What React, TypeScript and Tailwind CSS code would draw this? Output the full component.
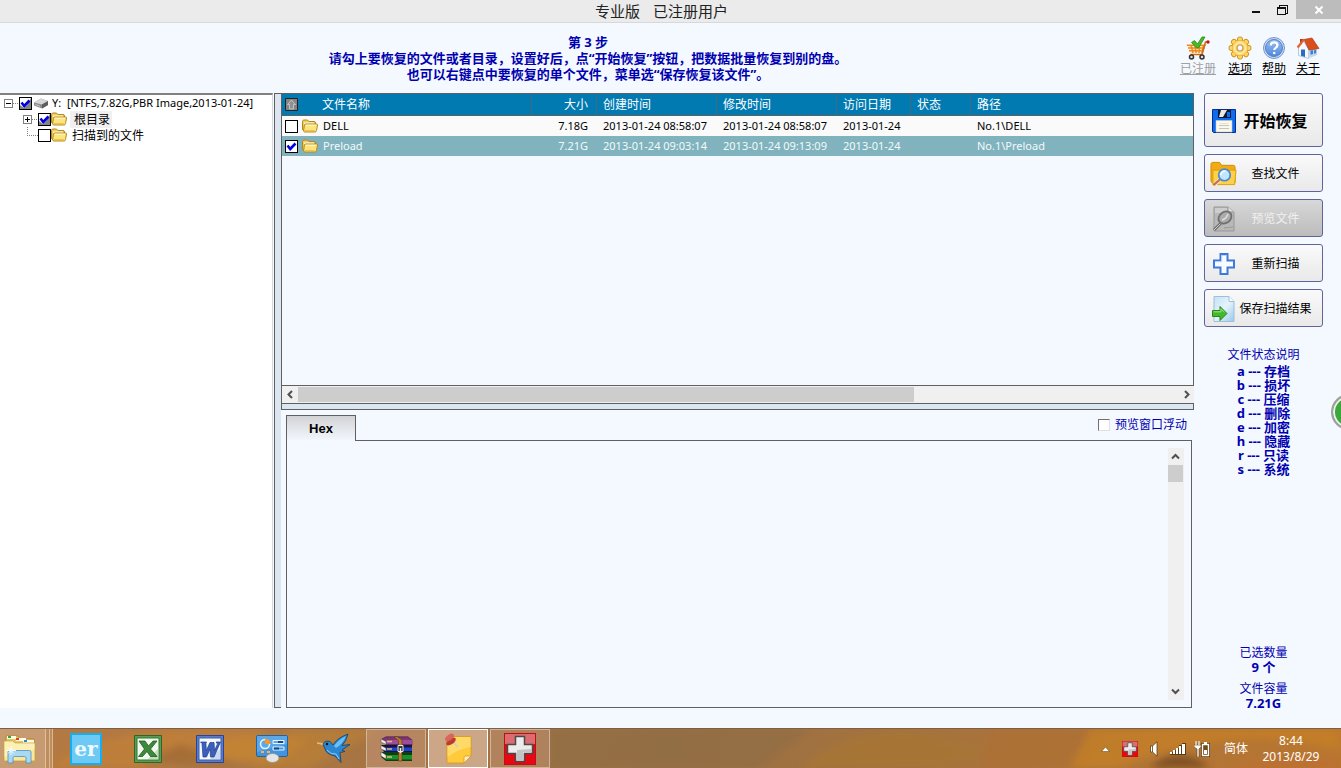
import { useState } from 'react';
import type { ReactNode } from 'react';

type FileRow = {
  name: string;
  size: string;
  created: string;
  modified: string;
  accessed: string;
  status: string;
  path: string;
};

const files: FileRow[] = [
  { name: 'DELL', size: '7.18G', created: '2013-01-24 08:58:07', modified: '2013-01-24 08:58:07', accessed: '2013-01-24', status: '', path: 'No.1\\DELL' },
  { name: 'Preload', size: '7.21G', created: '2013-01-24 09:03:14', modified: '2013-01-24 09:13:09', accessed: '2013-01-24', status: '', path: 'No.1\\Preload' },
];

const columns = ['创建时间', '修改时间', '访问日期', '状态'];

const legend = [
  ['a', '存档'],
  ['b', '损坏'],
  ['c', '压缩'],
  ['d', '删除'],
  ['e', '加密'],
  ['h', '隐藏'],
  ['r', '只读'],
  ['s', '系统'],
];

const FolderIcon = () => (
  <svg width="16" height="14" viewBox="0 0 16 14" className="shrink-0">
    <path d="M.5 10V2.500Q.5 1 2 1h3.500L7 2.500h5q1.500 0 1.500 1.500v7H2Q.5 11.500.5 10Z" fill="#f0cc58" stroke="#b08a20" />
    <path d="M2 3.500h10v3H2z" fill="#fffbe4" />
    <path d="M3.500 5h11q1.200 0 1 1l-1 5.500q-.2 1.500-1.500 1.500H3q-1.200 0-1.400-1L2.400 6q.1-1 1.100-1Z" fill="#ffe47c" stroke="#b08a20" />
    <path d="M4 6.200h10" stroke="#fffad8" />
    <path d="M3 11.800h9.500" stroke="#e4b43c" />
  </svg>
);

const DriveIcon = () => (
  <svg width="16" height="12" viewBox="0 0 16 12" className="shrink-0">
    <path d="M1 5.500 8 1.500l7 2.500v4L9 11.500 1 8.500Z" fill="#8b8b8b" />
    <path d="M1 5.500 8 1.500l7 2.500-6 3.500Z" fill="#d6d6d6" />
    <path d="M9 7.500 15 4v4l-6 3.500Z" fill="#5d5d5d" />
    <path d="M2.500 7.500 7 9.200" stroke="#c9c9c9" />
  </svg>
);

const CheckBox = ({ label, initial = false, partial = false }: { label: string; initial?: boolean; partial?: boolean }) => (
  <span className="relative inline-flex shrink-0">
    <input
      type="checkbox"
      aria-label={label}
      defaultChecked={initial}
      className={`peer size-[13px] appearance-none border border-black bg-white ${partial ? 'checked:bg-[#848484]' : ''}`}
    />
    <svg width="13" height="13" viewBox="0 0 13 13" className="pointer-events-none absolute inset-0 hidden peer-checked:block">
      {partial && <path d="M1 1h11L8 8 5 11 1 8Z" fill="#fff" />}
      <path d="M2.500 5.500 5.200 9 10.500 3.500" fill="none" stroke="#0000e0" strokeWidth="2.600" />
    </svg>
  </span>
);

const Expander = ({ open }: { open: boolean }) => (
  <svg width="9" height="9" viewBox="0 0 9 9" className="shrink-0" shapeRendering="crispEdges">
    <path d="M.5.5h8v8h-8z" fill="#fff" stroke="#808080" />
    <path d={open ? 'M2 4.500h5' : 'M2 4.500h5M4.500 2v5'} stroke="#000" />
  </svg>
);

const Dots = ({ w }: { w: number }) => (
  <svg width={w} height="1" className="shrink-0" shapeRendering="crispEdges">
    <path d={`M0 .5H${w}`} stroke="#808080" strokeDasharray="1 1" />
  </svg>
);

const Chevron = ({ d }: { d: string }) => (
  <svg width="9" height="9" viewBox="0 0 9 9">
    <path d={d} fill="none" stroke="#505050" strokeWidth="2" />
  </svg>
);

/* toolbar drawings */

const CartIcon = () => (
  <svg width="24" height="24" viewBox="0 0 24 24">
    <path d="M1 9h19l-3 8H4Z" fill="#ffe8c8" />
    <path d="M.8 9.200h19M2 12h17M3 14.800h15M5 9l2 8M9 9l1 8M13.500 9l-.5 8M17.500 9 16 17" stroke="#f08a1c" strokeWidth="1.500" fill="none" />
    <path d="M22 6h-2.500L16 18.500H4.500" stroke="#d06a10" strokeWidth="1.500" fill="none" />
    <circle cx="22" cy="6" r="1.700" fill="#c01818" />
    <circle cx="5.500" cy="21" r="2" fill="#ddd" stroke="#333" strokeWidth="1.500" />
    <circle cx="16" cy="21" r="2" fill="#ddd" stroke="#333" strokeWidth="1.500" />
    <path d="m5.500 6.500 3-2 3 3.500L16 1h3l-6.500 11h-2Z" fill="#4cb82c" stroke="#2a8a14" strokeWidth=".8" />
  </svg>
);

const GearIcon = () => (
  <svg width="24" height="24" viewBox="0 0 24 24">
    {[0, 45, 90, 135, 180, 225, 270, 315].map((a) => (
      <rect key={a} x="9.500" y="1" width="5" height="7" rx="2" fill="#ffd668" stroke="#cf9414" transform={`rotate(${a} 12 12)`} />
    ))}
    <circle cx="12" cy="12" r="7.800" fill="#ffdc72" stroke="#dda52c" strokeWidth=".6" />
    <circle cx="12" cy="12" r="5.500" fill="none" stroke="#fff0b4" />
    <circle cx="12" cy="12" r="3" fill="#f4f8ff" stroke="#c99a60" strokeWidth="1.200" />
  </svg>
);

const HelpIcon = () => (
  <svg width="24" height="24" viewBox="0 0 24 24">
    <defs>
      <linearGradient id="help" x2="0" y2="1">
        <stop stopColor="#9ebff0" />
        <stop offset="1" stopColor="#4d88dc" />
      </linearGradient>
    </defs>
    <circle cx="12" cy="12" r="10.500" fill="#c8dcf8" stroke="#7698cc" />
    <circle cx="12" cy="12" r="8.500" fill="url(#help)" stroke="#5580c4" />
    <path d="M8.800 9.500q0-3.200 3.300-3.200t3.300 2.900q0 1.500-1.700 2.600-1.400.9-1.400 2.200" fill="none" stroke="#fff" strokeWidth="2.200" />
    <circle cx="12.200" cy="17" r="1.300" fill="#fff" />
  </svg>
);

const HouseIcon = () => (
  <svg width="24" height="24" viewBox="0 0 24 24">
    <path d="M4 3h3.500v6H4z" fill="#a83c1c" />
    <path d="M2.500 12 7.500 5 12.500 13v9.500l-10-3Z" fill="#f5f8fc" stroke="#8ea8c4" strokeWidth=".6" />
    <path d="M12.500 13H21v6l-8.500 3.500Z" fill="#c3d8ee" />
    <path d="M5 13.500h4v7.500l-4-1.200z" fill="#2b6cc0" />
    <path d="m14.500 14.500 2.500-.3v3.800l-2.500.8Zm3.600-.4 2-.3v3.400l-2 .6Z" fill="#3b80d0" />
    <path d="M8 3.500 16 2l7 10.500-10 1.500Z" fill="#d9501c" stroke="#b03a10" strokeWidth=".7" />
    <path d="M8 3.500 1.500 11.500" stroke="#e8602c" strokeWidth="2" />
  </svg>
);

/* action button drawings */

const FloppyIcon = () => (
  <svg width="24" height="24" viewBox="0 0 24 24">
    <path d="M.5.5h23v23h-22l-1-1Z" fill="#0a6cf0" stroke="#0a2a90" />
    <path d="M6 1h13v8H6z" fill="#111827" />
    <path d="M9 1h6l-4 7H7Z" fill="#e8e8e8" />
    <path d="M15 3h3v5h-3z" fill="#0a6cf0" />
    <path d="M4 11.500h16V23H4z" fill="#faf8ec" stroke="#cfcbb0" strokeWidth=".6" />
    <path d="M7 16.500h10M7 19.500h10" stroke="#c4c4bc" />
    <path d="M8 14.500h8" stroke="#e5e2d0" />
  </svg>
);

const SearchFolderIcon = () => (
  <svg width="28" height="26" viewBox="0 0 28 26">
    <path d="M1 3q0-2 2-2h7l2 3h12q2 0 2 2v16H3q-2 0-2-2Z" fill="#f0ac10" stroke="#d08c08" />
    <path d="M3 9h24l-1.500 15H3Z" fill="#ffd148" stroke="#e09c10" />
    <path d="m10.500 18.500-5.500 5" stroke="#f4f4f4" strokeWidth="4" />
    <path d="m10.500 18.500-7 6" stroke="#c87444" strokeWidth="2.500" />
    <circle cx="15" cy="14" r="6" fill="#bfe6fc" stroke="#4c8ad0" strokeWidth="1.800" />
    <path d="M11 14q1-4 5-4" stroke="#fff" strokeWidth="1.500" fill="none" />
  </svg>
);

const PreviewIcon = () => (
  <svg width="26" height="28" viewBox="0 0 26 28">
    <path d="M3 2h14l6 5v19H3Z" fill="#b8b8b8" stroke="#989898" />
    <path d="M4 3h12v5H4z" fill="#cdcdcd" />
    <path d="M17 2v5h6" fill="#ddd" stroke="#999" />
    <path d="m11 17-8 8" stroke="#707070" strokeWidth="3" />
    <path d="m11 17-8 8" stroke="#ccc" strokeWidth="1" />
    <ellipse cx="14" cy="12.500" rx="7" ry="5.500" fill="#ababab" stroke="#707070" strokeWidth="1.800" transform="rotate(-35 14 12.500)" />
    <path d="M11 15q4-1 6-6" stroke="#e0e0e0" strokeWidth="1.500" fill="none" />
    <path d="m13 23 9-1" stroke="#999" />
  </svg>
);

const PlusIcon = () => (
  <svg width="24" height="24" viewBox="0 0 24 24">
    <path d="M8.500 2h7v6.500H22v7h-6.500V22h-7v-6.500H2v-7h6.500Z" fill="#f8fcff" stroke="#3e78dc" strokeWidth="2" />
    <path d="M3.500 9.700h6.200V3.500h4.600" stroke="#b9d8f8" fill="none" />
  </svg>
);

const ExportIcon = () => (
  <svg width="24" height="28" viewBox="0 0 24 28">
    <defs>
      <linearGradient id="sheet" x2="1" y2="1">
        <stop stopColor="#c5e2f6" />
        <stop offset=".5" stopColor="#e4f3fc" />
        <stop offset="1" stopColor="#9cc8ea" />
      </linearGradient>
    </defs>
    <path d="M2 1.500h15l5 5v20H2Z" fill="url(#sheet)" stroke="#9cbfdc" />
    <path d="M17 1.500v5h5" fill="#fff" stroke="#9cbfdc" />
    <path d="M.5 15.500H8v-4l7 7-7 7v-4H.5Z" fill="#46b82c" stroke="#23881a" />
    <path d="M1.500 16.800H9v-3l3.500 3.500" stroke="#9ce484" fill="none" />
  </svg>
);

const RedCross = ({ size }: { size: number }) => (
  <svg width={size} height={size} viewBox="0 0 32 32">
    <path d="M0 0h32v32H0z" fill="#c40c14" />
    <path d="M1 1h30v10Q16 15 1 11Z" fill="#dc6c70" />
    <path d="M1 12q15 4 30 0v19H1z" fill="#e60812" />
    <path d="M11.500 3.500h9v8h8v9h-8v8h-9v-8h-8v-9h8Z" fill="#ececec" stroke="#4a4a4a" strokeWidth="1.500" />
    <path d="M13 17v10h6v-8h8v-3Z" fill="#c4c4c4" />
  </svg>
);

/* task bar drawings */

const ExplorerIcon = () => (
  <svg width="34" height="32" viewBox="0 0 34 32">
    <path d="M3 3h12l2 3h14v20H3Z" fill="#e8c860" stroke="#a8842c" strokeWidth=".8" />
    <path d="M4 3h9v3H4zM13 5h10v3H13zM20 7h11v3H20z" fill="#fffbe8" />
    <path d="M5 3h3v2H5z" fill="#2ca844" />
    <path d="M13 5h3v2h-3z" fill="#d84028" />
    <path d="M21 7h3v2h-3z" fill="#2c88d8" />
    <path d="M1 8h9l2 2h20v18H1Z" fill="#f9e79a" stroke="#c5a040" strokeWidth=".8" />
    <path d="M1.500 8.500H10l2 2h19.500v6L1.500 24Z" fill="#fdf3c0" opacity=".7" />
    <path d="M5 30V19q0-1.500 1.500-1.500h20Q28 17.500 28 19v11h-5v-5q0-1.500-1.500-1.500h-10Q10 23.500 10 25v5Z" fill="#a9d9f2" stroke="#4a90c0" strokeWidth=".8" />
    <path d="M8 13v9M3 17.500h10M5 14.500l6 6M11 14.500l-6 6" stroke="#fff" opacity=".9" />
  </svg>
);

const ErIcon = () => (
  <span className="flex size-8 items-center justify-center border-2 border-[#16aeee] bg-[#6ccaf4] font-['DejaVu_Serif','Noto_Serif',serif] text-xl leading-5 font-bold text-[#f0faff]">er</span>
);

const ExcelIcon = () => (
  <svg width="28" height="28" viewBox="0 0 28 28">
    <path d="M.5.5h27v27H.5z" fill="#5d9a54" stroke="#2a6a28" />
    <path d="M3 3h22v22H3z" fill="#f3f8f1" stroke="#2f7a2c" />
    <path d="M14 24h10V14Z" fill="#c4dcc0" />
    <path d="M5 6h6l3.500 5L19 6h4l-6.500 8 6.500 7.500h-6.500L13 16.500 8.500 21.500h-4l6-7.500Z" fill="#3f8a3a" stroke="#1e5a1c" strokeWidth=".8" />
  </svg>
);

const WordIcon = () => (
  <svg width="28" height="28" viewBox="0 0 28 28">
    <path d="M.5.5h27v27H.5z" fill="#587cc4" stroke="#2444a0" />
    <path d="M3 3h22v22H3z" fill="#f5f8fd" stroke="#3c5cb0" />
    <path d="M14 24h10V14Z" fill="#ccd8f0" />
    <path d="M4.500 7h6l-.6 1.500.4 7L14 7.500h4l.5 8L21.500 9 20 7h4.500l-6.500 15h-3.500L14 14l-3.500 8H7L6 8.500Z" fill="#3c60bc" stroke="#203c8c" strokeWidth=".7" />
  </svg>
);

const PanelIcon = () => (
  <svg width="32" height="28" viewBox="0 0 32 28">
    <rect x=".5" y=".5" width="31" height="21" rx="1.500" fill="#4294dc" stroke="#1e64a8" />
    <path d="M1 1h30v8Q16 13 1 17Z" fill="#6db4ee" opacity=".6" />
    <circle cx="9" cy="9" r="4.500" fill="none" stroke="#e8f4ff" strokeWidth="1.500" />
    <path d="M9 9V3.500A5.500 5.500 0 0 1 14.500 9Z" fill="#f89820" />
    <path d="M17 5.500h11v3H17zM17 12h11v3H17z" fill="none" stroke="#e8f4ff" />
    <path d="M22 6h5v2h-5zM18 12.500h5v2h-5z" fill="#134a88" />
    <path d="M5 17h3M11 17h3" stroke="#ffb050" strokeWidth="2" />
    <ellipse cx="16.500" cy="23" rx="6.500" ry="4.500" fill="#e4e4e4" stroke="#8c8c8c" strokeWidth=".7" />
  </svg>
);

const BirdIcon = () => (
  <svg width="34" height="32" viewBox="0 0 34 32">
    <path d="m0 10 7 .5v1.500Z" fill="#f0c060" stroke="#e8c070" />
    <path d="M6 11q2-4 7-2.500l3 3.500Q20 5 31 1q-2 8-6 11.500l8-1-8 5.500 3 1.500-5 1 1 10-6-6.500Q9 21 8 16Z" fill="#2c86d0" stroke="#12406c" strokeWidth=".8" />
    <path d="M17 13q5-7 12-10-3 8-10 12Z" fill="#6cc0f4" />
    <path d="M10 17q4 5 9 4l3 5" fill="none" stroke="#8cd0f8" />
    <circle cx="10" cy="11" r="1.200" fill="#111" />
  </svg>
);

const RarIcon = () => (
  <svg width="33" height="26" viewBox="0 0 33 26">
    <path d="M2 3 6 .8h22L32 4v5H6Z" fill="#7c3474" stroke="#401840" strokeWidth=".6" />
    <path d="M6 4h26v4H6z" fill="#a04c98" />
    <path d="M1 9h31v7H4Z" fill="#14143c" />
    <path d="M6 11.500h26V15H6z" fill="#1c44c8" />
    <path d="M1 16h31v9H6l-5-4Z" fill="#123c14" />
    <path d="M6 19h26v4.500H6z" fill="#1a9028" />
    <path d="M7 5.500h5M7 13h5M7 21h5" stroke="#d8c078" strokeWidth="1.500" />
    <path d="m1 3 5 2.500v3L1 6Zm0 6.500 5 2.500v3L1 13Zm0 6.500 5 3v4l-5-3Z" fill="#f2f2f2" stroke="#444" strokeWidth=".5" />
    <path d="m17 .5 5 3.500v21h-3.500V4.500L14 1Z" fill="#b47c34" stroke="#5c3810" strokeWidth=".6" />
    <path d="M18 9.500h5v6h-5z" fill="#333" stroke="#e8e8e8" />
    <path d="M20.500 12v5" stroke="#eee" strokeWidth="1.500" />
  </svg>
);

const NoteIcon = () => (
  <svg width="28" height="32" viewBox="0 0 28 32">
    <path d="M3 5q0-1.500 1.500-1.500h21Q27 3.500 27 5v18l-7 7H4.500Q3 30 3 28.500Z" fill="#ffcb3c" stroke="#d89818" strokeWidth=".8" />
    <path d="M3.500 4h23v10q-12 2-23 10Z" fill="#ffe07c" opacity=".7" />
    <path d="M20 30v-5.500q0-1.500 1.500-1.500H27Z" fill="#fff0b8" stroke="#d89818" strokeWidth=".8" />
    <path d="m8 8 6 6" stroke="#ccc" strokeWidth="1.500" />
    <ellipse cx="7" cy="8.500" rx="5.500" ry="2.800" fill="#b83c34" transform="rotate(-35 7 8.500)" />
    <ellipse cx="5.500" cy="4.500" rx="5" ry="2.800" fill="#dc6458" transform="rotate(-35 5.500 4.500)" />
  </svg>
);

const SpeakerIcon = () => (
  <svg width="8" height="16" viewBox="0 0 8 16">
    <path d="M.5 5h2L7 .8v14.400L2.500 11h-2Z" fill="#fff" stroke="#5a3c14" strokeWidth=".8" />
    <path d="M2.500 5v6" stroke="#5a3c14" strokeWidth=".8" />
  </svg>
);

const SignalIcon = () => (
  <svg width="16" height="12" viewBox="0 0 16 12" shapeRendering="crispEdges">
    <path d="M0 9h3v3H0zM3 7h3v5H3zM6 5h3v7H6zM9 2h3v10H9zM12 0h4v12h-4z" fill="#5a3c14" />
    <path d="M0 9h2v2H0zM3 7h2v4H3zM6 5h2v6H6zM9 3h2v8H9zM12 1h3v10h-3z" fill="#fff" />
  </svg>
);

const PowerIcon = () => (
  <svg width="16" height="16" viewBox="0 0 16 16">
    <path d="M2 0v4M5 0v4M0 4h7v2L5 8v8H3V8L0 6Z" fill="#fff" stroke="#5a3c14" strokeWidth=".6" />
    <path d="M2 0v4M5 0v4" stroke="#fff" strokeWidth="1.200" />
    <path d="M8.500 3.500h6v11h-6z" fill="none" stroke="#5a3c14" strokeWidth="3" />
    <path d="M10 1h3v2h-3z" fill="#fff" />
    <path d="M8.500 3.500h6v11h-6z" fill="#74491a" stroke="#fff" strokeWidth="1.400" />
    <path d="M10 9h3v4h-3z" fill="#fff" />
  </svg>
);

const actions: { label: string; icon: ReactNode; big?: boolean; disabled?: boolean }[] = [
  { label: '开始恢复', icon: <FloppyIcon />, big: true },
  { label: '查找文件', icon: <SearchFolderIcon /> },
  { label: '预览文件', icon: <PreviewIcon />, disabled: true },
  { label: '重新扫描', icon: <PlusIcon /> },
  { label: '保存扫描结果', icon: <ExportIcon /> },
];

const TitleBar = () => (
  <header className="flex h-[23px] items-start border-b border-[#d8d8d8] bg-[#ebebeb]">
    <h1 className="flex-1 pl-20 text-center text-[15px] leading-[22px] text-[#222]">
      专业版<span className="ml-[13px]">已注册用户</span>
    </h1>
    <button aria-label="最小化" className="flex h-[19px] w-[26px] items-center justify-center">
      <svg width="8" height="8"><path d="M0 5h8v2H0z" fill="#111" /></svg>
    </button>
    <button aria-label="还原" className="flex h-[19px] w-[27px] items-center justify-center pr-px">
      <svg width="11" height="10" viewBox="0 0 11 10" shapeRendering="crispEdges">
        <path d="M2.500 2V.5h8V8H9" fill="none" stroke="#111" />
        <path d="M0 2h9v8H0Z" fill="#111" />
        <path d="M1 4h7v5H1Z" fill="#ebebeb" />
      </svg>
    </button>
    <button aria-label="关闭" className="flex h-[19px] w-[45px] items-center justify-center bg-[#bcbcbc]">
      <svg width="8" height="8"><path d="m.5.5 7 7m0-7-7 7" stroke="#fff" strokeWidth="2" /></svg>
    </button>
  </header>
);

const ToolLink = ({ label, icon, muted }: { label: string; icon: ReactNode; muted?: boolean }) => (
  <a href="#" className={`flex flex-col items-center gap-px text-xs leading-4 underline ${muted ? 'mr-0.5 text-[#a0a0a0]' : 'text-black'}`}>
    {icon}
    {label}
  </a>
);

const TopPanel = () => (
  <div className="flex h-[70px] items-start">
    <p className="flex-1 pt-[11px] text-center text-[13px] leading-4 font-bold text-[#0000b0]">
      第 3 步<br />
      请勾上要恢复的文件或者目录，设置好后，点“开始恢复”按钮，把数据批量恢复到别的盘。<br />
      也可以右键点中要恢复的单个文件，菜单选“保存恢复该文件”。
    </p>
    <nav className="flex w-[165px] justify-end gap-2.5 pt-[13px] pr-[21px]">
      <ToolLink label="已注册" icon={<CartIcon />} muted />
      <ToolLink label="选项" icon={<GearIcon />} />
      <ToolLink label="帮助" icon={<HelpIcon />} />
      <ToolLink label="关于" icon={<HouseIcon />} />
    </nav>
  </div>
);

const TreePanel = () => (
  <aside className="w-[273px] shrink-0 border-t-2 border-r border-t-[#808080] border-r-[#d8d8d8] bg-white text-black">
    <ul>
      <li>
        <div className="flex h-4 items-center pl-1">
          <Expander open />
          <Dots w={6} />
          <CheckBox label="Y:" initial partial />
          <span className="ml-px flex"><DriveIcon /></span>
          <span className="ml-[3px] text-[11px] whitespace-pre">Y:  [NTFS,7.82G,PBR Image,2013-01-24]</span>
        </div>
        <ul className="pl-[23px]">
          <li className="flex h-4 items-center">
            <Expander open={false} />
            <Dots w={6} />
            <CheckBox label="根目录" initial partial />
            <FolderIcon />
            <span className="ml-[3px] bg-[#f0f0f0] pt-px pr-0.5 pl-1 text-xs leading-4">根目录</span>
          </li>
          <li className="flex h-4 items-center">
            <svg width="15" height="16" className="shrink-0" shapeRendering="crispEdges">
              <path d="M4.500 0v8.500H15" fill="none" stroke="#808080" strokeDasharray="1 1" />
            </svg>
            <CheckBox label="扫描到的文件" />
            <FolderIcon />
            <span className="ml-[5px] pt-px text-xs leading-4">扫描到的文件</span>
          </li>
        </ul>
      </li>
    </ul>
  </aside>
);

const FileTable = () => {
  const [selected, setSelected] = useState('Preload');

  return (
    <div className="h-[293px] overflow-hidden border border-[#606060]">
      <table className="w-full table-fixed border-separate border-spacing-0 text-left">
        <colgroup>
          <col className="w-[250px]" />
          <col className="w-[65px]" />
          <col className="w-[120px]" />
          <col className="w-[120px]" />
          <col className="w-[74px]" />
          <col className="w-[60px]" />
          <col />
        </colgroup>
        <thead>
          <tr className="h-[22px] bg-[#007ab1] text-xs leading-4 text-white">
            <th className="border-r border-b border-r-[#3f6a82] border-b-[#606060] pl-[3px] font-normal">
              <div className="flex items-center">
                <svg width="13" height="13" viewBox="0 0 13 13">
                  <path d="M.5.5h12v12H.5z" fill="#848484" stroke="#222" />
                  <path d="m6.500 2 4 4.500h-2V11h-4V6.500h-2Z" fill="#909090" stroke="#d0d0d0" strokeWidth=".8" />
                </svg>
                <span className="ml-6">文件名称</span>
              </div>
            </th>
            <th className="border-r border-b border-r-[#3f6a82] border-b-[#606060] pr-2 text-right font-normal">大小</th>
            {columns.map((c) => (
              <th key={c} className="border-r border-b border-r-[#3f6a82] border-b-[#606060] pl-1.5 font-normal">{c}</th>
            ))}
            <th className="border-b border-[#606060] pl-1.5 font-normal">路径</th>
          </tr>
        </thead>
        <tbody>
          {files.map((f) => (
            <tr
              key={f.name}
              onClick={() => setSelected(f.name)}
              className={`h-5 text-[11px] leading-4 whitespace-nowrap ${f.name === selected ? 'bg-[#80b3be] text-[#f2fafa]' : 'bg-[#fafafa] text-black'}`}
            >
              <td className="pl-[3px]">
                <div className="flex items-center">
                  <CheckBox label={f.name} initial={f.name === 'Preload'} />
                  <span className="mr-[5px] ml-1 flex"><FolderIcon /></span>
                  {f.name}
                </div>
              </td>
              <td className="pr-[9px] text-right">{f.size}</td>
              <td className="pl-1.5">{f.created}</td>
              <td className="pl-1.5">{f.modified}</td>
              <td className="pl-1.5">{f.accessed}</td>
              <td className="pl-1.5">{f.status}</td>
              <td className="pl-1.5">{f.path}</td>
            </tr>
          ))}
        </tbody>
      </table>
    </div>
  );
};

const HexPanel = () => (
  <section className="mt-[5px] mr-0.5 ml-[5px] flex flex-1 flex-col">
    <div className="relative z-10 -mb-px flex h-[26px] justify-between">
      <button className="w-[70px] border-x border-t border-[#606060] bg-linear-to-b from-[#d2d3d5] to-[#f4f8ff] font-['Liberation_Sans',Arial,sans-serif] text-[13px] font-bold text-black">
        Hex
      </button>
      <label className="flex h-5 items-center gap-[5px] pr-[5px] text-xs text-[#0000b0]">
        <input type="checkbox" className="size-3 appearance-none border border-t-[#707070] border-r-[#e0e0e0] border-b-[#e0e0e0] border-l-[#707070] bg-white checked:bg-[#0000b0]" />
        预览窗口浮动
      </label>
    </div>
    <div className="flex flex-1 justify-end border border-[#606060] py-[7px] pr-[7px]">
      <div className="flex w-4 flex-col bg-[#f0f0f0]">
        <button aria-label="向上滚动" className="flex h-[17px] items-center justify-center pr-px"><Chevron d="M1 6.500 4.500 3 8 6.500" /></button>
        <div className="mr-px h-[17px] bg-[#cdcdcd]" />
        <button aria-label="向下滚动" className="mt-auto flex h-[17px] items-center justify-center pr-px"><Chevron d="M1 2.500 4.500 6 8 2.500" /></button>
      </div>
    </div>
  </section>
);

const SidePanel = () => (
  <aside className="ml-2.5 mr-[18px] flex w-[119px] shrink-0 flex-col gap-[7px]">
    {actions.map((a) => (
      <button
        key={a.label}
        disabled={a.disabled}
        className={`flex items-center rounded-[3px] border border-[#62629c] pl-[5px] ${a.big ? 'h-[54px] text-base font-bold' : 'h-[38px] text-xs'} ${
          a.disabled ? 'bg-linear-to-b from-[#d8d8d8] to-[#bcbcbc] text-[#f0f0f0]' : 'bg-linear-to-b from-[#fafafa] to-[#e9e9e9] text-black'
        }`}
      >
        <span className="flex w-[27px] shrink-0 justify-center pt-0.5">{a.icon}</span>
        <span className="flex-1 pt-0.5 pr-2 text-center">{a.label}</span>
      </button>
    ))}
    <div className="mt-[13px] text-center text-[#0000b0]">
      <h2 className="mb-px text-xs leading-4">文件状态说明</h2>
      <ul className="text-[13px] leading-[14px] font-bold">
        {legend.map(([key, text]) => (
          <li key={key}>{key} --- {text}</li>
        ))}
      </ul>
    </div>
    <dl className="mt-auto mb-[-2px] text-center text-[#0000b0]">
      <dt className="text-xs leading-[14px]">已选数量</dt>
      <dd className="mb-2 text-[13px] leading-[14px] font-bold">9 个</dd>
      <dt className="text-xs leading-[14px]">文件容量</dt>
      <dd className="text-[13px] leading-[14px] font-bold">7.21G</dd>
    </dl>
  </aside>
);

const launchers = [
  { label: '浏览器', icon: <ErIcon /> },
  { label: 'Excel', icon: <ExcelIcon /> },
  { label: 'Word', icon: <WordIcon /> },
  { label: '控制面板', icon: <PanelIcon /> },
  { label: '飞鸟', icon: <BirdIcon /> },
];

const TaskBar = () => (
  <footer className="relative mt-5 flex h-10 items-center overflow-hidden border-t border-[#7a6048] bg-linear-to-r from-[#b67a42] via-[#9a7044] to-[#b97630]">
    {/* flower wallpaper showing through the glass */}
    <svg className="absolute inset-0 h-full w-full" viewBox="0 0 1341 40" preserveAspectRatio="none">
      <defs>
        <filter id="soft"><feGaussianBlur stdDeviation="4" /></filter>
      </defs>
      <g filter="url(#soft)">
        <path d="M50 40Q90 5 180 0h90q-40 25-130 40Z" fill="#c48036" opacity=".7" />
        <path d="M180 32q60-34 130-22l-30 24Z" fill="#ca882e" opacity=".7" />
        <path d="M290 0h90l-70 40h-60Z" fill="#be8232" opacity=".6" />
        <path d="M140 34l40-18 60 20Z" fill="#7c5434" opacity=".4" />
        <path d="M550 0h260l-50 40H550Z" fill="#8e6c44" opacity=".6" />
        <path d="M800 40q50-40 110-38l80 20-50 18Z" fill="#a67636" opacity=".8" />
        <path d="M990 0h110l-30 40h-90Z" fill="#ad7034" opacity=".8" />
        <path d="M1090 0h250v22q-60-16-110-10-60 5-110 28h-50Z" fill="#c88024" opacity=".7" />
        <path d="M1150 40q20-22 50-8l10 8Z" fill="#6c4220" opacity=".7" />
        <path d="M1230 40q40-16 111-8v8Z" fill="#bd7030" />
      </g>
    </svg>
    <div className="relative flex flex-1 items-center self-stretch">
      <button aria-label="资源管理器" className="flex h-[39px] w-[46px] items-center border-r border-[#dcc0a0] bg-white/25 pl-[3px]"><ExplorerIcon /></button>
      <span className="flex h-full w-[7px] justify-between border-r border-[#d8b890] bg-white/15 pl-[3px]"><span className="w-px bg-[#d8b890]" /></span>
      <div className="flex items-center pl-0.5">
        {launchers.map((l) => (
          <button key={l.label} aria-label={l.label} className="flex w-[62px] items-center justify-center">{l.icon}</button>
        ))}
      </div>
      <div className="flex gap-0.5 pl-px">
        <button aria-label="WinRAR" className="flex h-[39px] w-[60px] items-center justify-center border border-[#cfb59c] bg-[#d8a898]/35"><RarIcon /></button>
        <button aria-label="便笺" className="flex h-[39px] w-[60px] items-center justify-center border border-white bg-[#ecd0c0]/55"><NoteIcon /></button>
        <button aria-label="数据恢复" className="flex h-[39px] w-[60px] items-center justify-center border border-[#cfb59c] bg-[#d8a898]/30"><RedCross size={32} /></button>
      </div>
    </div>
    <div className="relative flex items-center pr-5 text-xs text-white">
      <svg width="9" height="6" viewBox="0 0 9 6"><path d="m.5 5.500 4-4.500 4 4.500Z" fill="#fff" stroke="#5a3c14" strokeWidth=".5" /></svg>
      <span className="ml-3"><RedCross size={16} /></span>
      <span className="ml-3"><SpeakerIcon /></span>
      <span className="ml-3"><SignalIcon /></span>
      <span className="ml-2"><PowerIcon /></span>
      <span className="ml-[14px]">简体</span>
      <time className="ml-[13px] w-[60px] text-center leading-4">8:44<br />2013/8/29</time>
    </div>
  </footer>
);

const App = () => (
  <div className="relative flex min-h-screen flex-col overflow-hidden bg-[#f4f8ff] font-['Noto_Sans','Noto_Sans_CJK_SC',sans-serif]">
    <TitleBar />
    <TopPanel />
    <main className="flex flex-1">
      <TreePanel />
      <div className="ml-px w-[7px] shrink-0 border border-r-0 border-[#606060] bg-[#dce6f0]" />
      <div className="flex min-w-0 flex-1 flex-col">
        <FileTable />
        <div className="flex h-[17px] border-l border-[#606060] bg-[#f0f0f0] py-px">
          <button aria-label="向左滚动" className="flex w-4 items-center justify-center"><Chevron d="M6 1 2.500 4.500 6 8" /></button>
          <div className="flex-1"><div className="h-full w-[70%] bg-[#cdcdcd]" /></div>
          <button aria-label="向右滚动" className="flex w-4 items-center justify-center"><Chevron d="M3 1l3.500 3.500L3 8" /></button>
        </div>
        <div className="h-[7px] border border-[#606060] bg-[#dce6f0]" />
        <HexPanel />
      </div>
      <SidePanel />
    </main>
    <TaskBar />
    <button aria-label="悬浮球" className="absolute top-[394px] -right-[26px] size-9 rounded-full border-2 border-[#a0a0a0] bg-[#3aa83c] shadow-[inset_0_0_0_2px_#f0f0f0]" />
  </div>
);

export default App;
